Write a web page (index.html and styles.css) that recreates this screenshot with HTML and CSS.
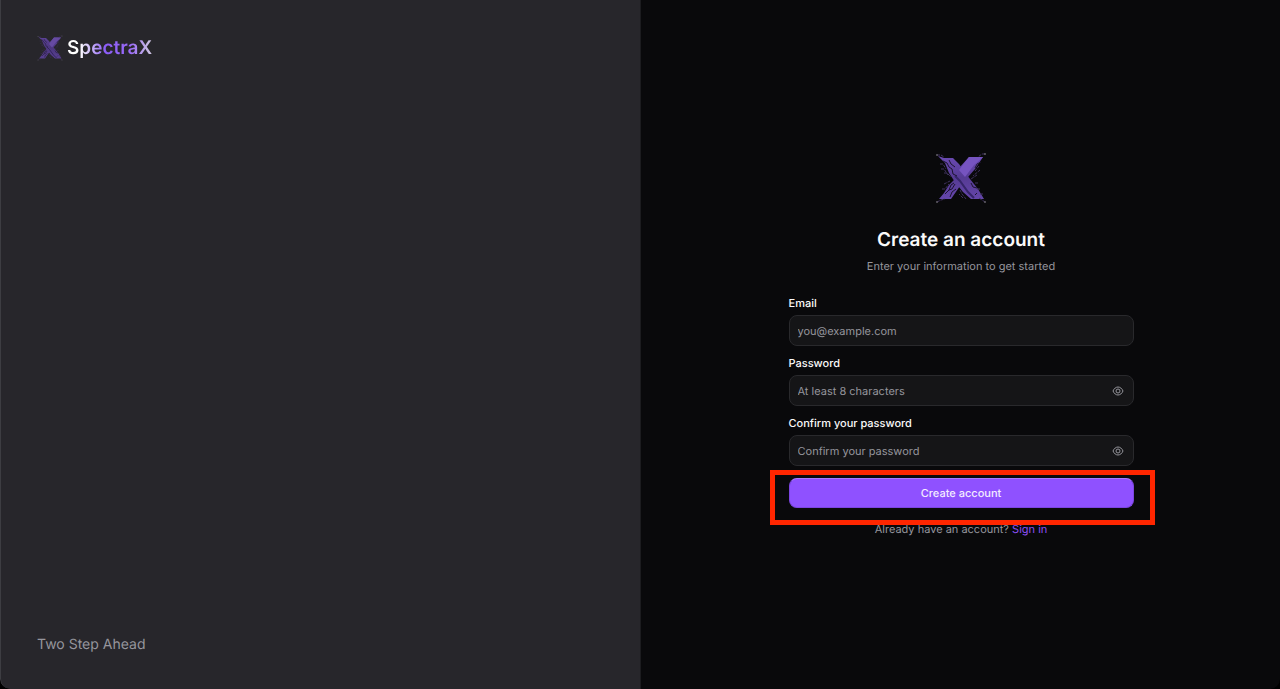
FILE: index.html
```
<!DOCTYPE html>
<html lang="en">
<head>
    <meta charset="UTF-8">
    <meta name="viewport" content="width=device-width, initial-scale=1.0">
    <title>SpectraX - Create an account</title>
    <link rel="stylesheet" href="styles.css">
</head>
<body>
    <svg class="sprite" aria-hidden="true">
        <defs>
            <linearGradient id="arm" x1="0" y1="0" x2="0" y2="1">
                <stop offset="0" stop-color="#6a4ab2"/>
                <stop offset="0.5" stop-color="#563b94"/>
                <stop offset="1" stop-color="#6446aa"/>
            </linearGradient>
        </defs>
        <symbol id="logo" viewBox="0 0 52 52">
            <path d="M34 5h14l-4 6-4 6-7 8-8 9-9 13H4l5-6 5-8 8-8 2-9z" fill="url(#arm)"/>
            <path d="M3 4l6 2h9l6 6 5 7 6 8 8 10 6 10H36l-8-7-8-10-6-9-4-10z" fill="url(#arm)"/>
            <path d="M34 5h14l-9 8-9 12-6-7z" fill="#7654c0"/>
            <path d="M20 24l5 5 8 11 6 6" fill="none" stroke="#36256a" stroke-width="2"/>
            <path d="M8 9l4 2 2 4 3 2 1 5 4 2M14 8l2 4 4 3M10 42l4-4 3-1 3-5M15 45l2-5 4-3M36 31l2 4 4 1M40 43l2-2M40 16l2-4 4-2M19 31l-3 2-2 5" fill="none" stroke="#1c142f" stroke-width="1"/>
            <path d="M2 3h4l3 2M50 2h-3l-4 3M2 50l4-2 4-1M50 50l-3-2-3-2M5 12h3l3 5M6 17h3l4 6M9 21h3l4 4M44 14l-4 5M45 18l-7 6M42 23l-6 4M7 37h3l4-5M9 32l6-3M43 31h-4M45 37h-3M48 42h-4M31 47l-4-5-2-4M28 46l-4-4" fill="none" stroke="#40325f" stroke-width="1" stroke-dasharray="3 1"/>
            <g fill="#5f5d65">
                <circle cx="2" cy="3" r="1"/>
                <circle cx="50" cy="2" r="1"/>
                <circle cx="2" cy="50" r="1"/>
                <circle cx="50" cy="50" r="1"/>
            </g>
        </symbol>
        <symbol id="eye" viewBox="0 0 24 24">
            <path d="M2 12c2-5 6-8 10-8s8 3 10 8c-2 5-6 8-10 8s-8-3-10-8z"/>
            <circle cx="12" cy="12" r="4"/>
        </symbol>
    </svg>

    <main class="page">
        <section class="brand-panel">
            <div class="brand">
                <svg class="brand-logo" aria-hidden="true"><use href="#logo"/></svg>
                <span class="brand-name">SpectraX</span>
            </div>
            <p class="tagline">Two Step Ahead</p>
        </section>

        <section class="form-panel">
            <form class="signup">
                <svg class="signup-logo" aria-hidden="true"><use href="#logo"/></svg>
                <h1>Create an account</h1>
                <p class="subtitle">Enter your information to get started</p>

                <div class="field">
                    <label for="email">Email</label>
                    <input type="email" id="email" placeholder="you@example.com">
                </div>
                <div class="field">
                    <label for="password">Password</label>
                    <div class="input-wrap">
                        <input type="password" id="password" placeholder="At least 8 characters">
                        <button type="button" class="toggle" aria-label="Show password"><svg><use href="#eye"/></svg></button>
                    </div>
                </div>
                <div class="field">
                    <label for="confirm">Confirm your password</label>
                    <div class="input-wrap">
                        <input type="password" id="confirm" placeholder="Confirm your password">
                        <button type="button" class="toggle" aria-label="Show password"><svg><use href="#eye"/></svg></button>
                    </div>
                </div>

                <div class="submit-wrap">
                    <button type="submit" class="submit">Create account</button>
                    <div class="highlight"></div>
                </div>
                <p class="signin">Already have an account? <a href="#">Sign in</a></p>
            </form>
        </section>
    </main>

    <script>
        document.querySelectorAll('.toggle').forEach(function(button) {
            button.addEventListener('click', function() {
                const input = button.previousElementSibling;
                input.type = input.type === 'password' ? 'text' : 'password';
            });
        });
    </script>
</body>
</html>
```
FILE: styles.css
```
* {
    box-sizing: border-box;
}

body {
    margin: 0;
    background: #000;
    color: #fafafa;
    font-family: Inter, sans-serif;
    font-size: 11px;
    line-height: 16px;
    text-rendering: geometricPrecision;
}

h1,
p {
    margin: 0;
}

.sprite {
    position: absolute;
    width: 0;
    height: 0;
}

.page {
    display: grid;
    grid-template-columns: 1fr 1fr;
    min-height: 100vh;
    background: #09090b;
    border-radius: 0 0 10px 10px;
    overflow: hidden;
}

.brand-panel {
    display: flex;
    flex-direction: column;
    justify-content: space-between;
    padding: 34px 36px;
    background: #27262b;
    border-left: 1px solid #3d3d42;
    border-bottom-left-radius: 10px;
}

.brand {
    display: flex;
    align-items: center;
    gap: 4px;
}

.brand-logo {
    width: 26px;
    height: 26px;
    opacity: 0.8;
}

.brand-name {
    font-size: 19px;
    font-weight: 600;
    line-height: 28px;
    background: linear-gradient(90deg, #fff 15%, #8b5cf6 45%, #9b6cf8 75%, #d0c8e0);
    -webkit-background-clip: text;
    background-clip: text;
    color: transparent;
}

.tagline {
    font-size: 14px;
    line-height: 20px;
    color: #96969d;
}

.form-panel {
    display: flex;
    align-items: center;
    justify-content: center;
    padding-left: 1px;
    border-left: 1px solid #1c1c1f;
}

.signup {
    display: flex;
    flex-direction: column;
    width: 100%;
    max-width: 345px;
}

.signup-logo {
    align-self: center;
    width: 52px;
    height: 52px;
    margin-bottom: 22px;
}

h1 {
    font-size: 19px;
    font-weight: 600;
    line-height: 28px;
    text-align: center;
}

.subtitle {
    margin: 4px 0 21px;
    color: #96969d;
    text-align: center;
}

.field {
    display: flex;
    flex-direction: column;
    gap: 4px;
    margin-bottom: 9px;
}

label {
    font-weight: 500;
}

input {
    width: 100%;
    height: 31px;
    padding: 0 8px;
    background: #151517;
    border: 1px solid #29292c;
    border-radius: 8px;
    color: #fafafa;
    font: inherit;
    text-rendering: inherit;
}

input::placeholder {
    color: #96969d;
    opacity: 1;
}

.input-wrap {
    position: relative;
}

.input-wrap input {
    padding-right: 32px;
}

.toggle {
    position: absolute;
    top: 0;
    right: 0;
    display: flex;
    align-items: center;
    justify-content: center;
    width: 31px;
    height: 31px;
    padding: 0;
    background: none;
    border: none;
    color: #96969d;
    cursor: pointer;
}

.toggle svg {
    width: 12px;
    height: 12px;
    fill: none;
    stroke: currentColor;
    stroke-width: 2;
}

.submit-wrap {
    position: relative;
    margin-top: 3px;
}

.submit {
    display: block;
    width: 100%;
    height: 30px;
    background: #8f51ff;
    border: 1px solid #7c45e0;
    border-top-color: #a97bff;
    border-radius: 8px;
    color: #f3ecff;
    font: inherit;
    font-weight: 500;
    text-rendering: inherit;
    cursor: pointer;
}

.highlight {
    position: absolute;
    inset: -8px -21px -17px -19px;
    border: 5px solid #ff2600;
    pointer-events: none;
}

.signin {
    margin-top: 13px;
    color: #96969d;
    text-align: center;
}

.signin a {
    color: #8b4ff5;
    text-decoration: none;
}
```
